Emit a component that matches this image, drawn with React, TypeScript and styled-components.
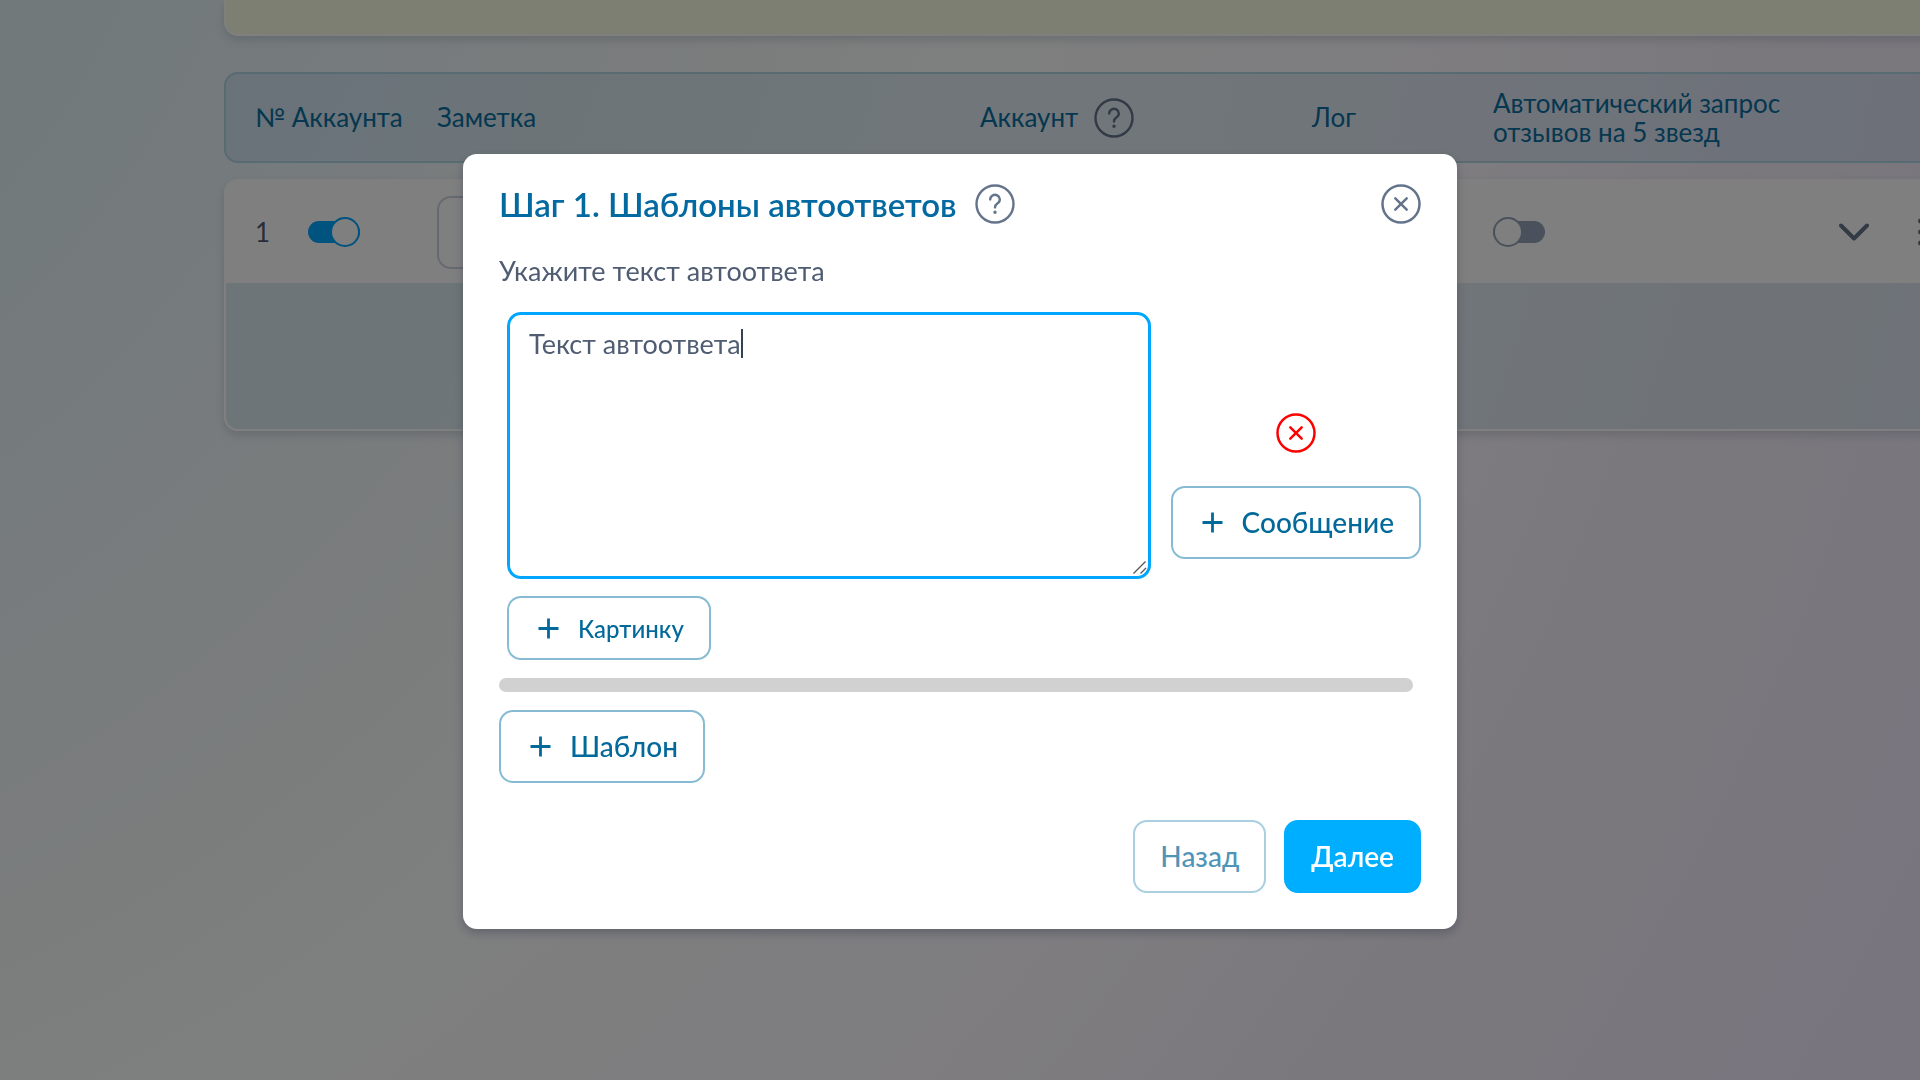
import React, { useLayoutEffect, useRef, useState } from 'react';
import styled, { createGlobalStyle, css } from 'styled-components';

const GlobalStyle = createGlobalStyle`
  *, *::before, *::after { box-sizing: border-box; }
  body {
    margin: 0;
    font-family: Lato, "Open Sans", sans-serif;
    font-size: 27px;
    line-height: 29px;
    color: #4f5c72;
  }
  button, input, textarea { font: inherit; color: inherit; }
`;

const Page = styled.div`
  min-height: 100vh;
  overflow: hidden;
  padding-left: 224px;
  background: radial-gradient(
    circle farthest-corner at -30% -28%,
    #e2f2f6 23%,
    #ecf6fb 34%,
    #f3f9f9 43%,
    #fdfefe 56%,
    #fcf9fe 73%,
    #f5f0fa 83%,
    #f0eafe 100%
  );
`;

const Main = styled.main`
  width: calc(100% + 64px);
`;

const Notice = styled.section`
  height: 36px;
  border: 2px solid #fff;
  border-top: 0;
  border-radius: 0 0 14px 14px;
  background: #f8ffe2;
  box-shadow: 0 4px 10px rgba(71, 85, 105, 0.2);
`;

const Table = styled.table`
  display: block;
  margin-top: 36px;
  font-size: 26px;
`;

const TableHead = styled.thead`
  display: block;
  border: 2px solid #b0d5e4;
  border-radius: 14px;
  background: rgba(148, 190, 222, 0.26);
  color: #0b6fa0;
`;

const TableBody = styled.tbody`
  display: block;
  margin-top: 16px;
  overflow: hidden;
  border: 2px solid #fff;
  border-radius: 14px;
  background: rgba(200, 222, 232, 0.5);
  box-shadow: 0 4px 10px rgba(71, 85, 105, 0.2);
`;

const Row = styled.tr<{ $filled?: boolean }>`
  display: grid;
  grid-template-columns: 182px 543px 332px 181px 346px 79px 1fr;
  align-items: center;
  padding-left: 29px;
  min-height: ${(p) => (p.$filled ? '102px' : '87px')};
  background: ${(p) => (p.$filled ? '#fff' : 'transparent')};
`;

const cell = css`
  display: flex;
  align-items: center;
  gap: 16px;
  padding: 0 24px 0 0;
  font-weight: 400;
  text-align: left;
`;

const HeadCell = styled.th`
  ${cell}
`;

const NumberHeadCell = styled(HeadCell)`
  padding: 0;
  white-space: nowrap;
`;

const Cell = styled.td`
  ${cell}
`;

const AccountCell = styled(Cell)`
  gap: 38px;
`;

const DetailsRow = styled.tr`
  display: block;
  height: 146px;
`;

const Switch = styled.input<{ $tone: string }>`
  appearance: none;
  display: grid;
  align-items: center;
  width: 52px;
  height: 30px;
  margin: 0;

  &::before,
  &::after {
    content: '';
    grid-area: 1 / 1;
  }

  &::before {
    height: 22px;
    border-radius: 11px;
    background: ${(p) => p.$tone};
  }

  &::after {
    width: 30px;
    height: 30px;
    border: 2px solid ${(p) => p.$tone};
    border-radius: 50%;
    background: #fff;
  }

  &:checked::after {
    justify-self: end;
  }
`;

const NoteInput = styled.input`
  width: 100%;
  height: 73px;
  padding: 0 20px;
  border: 2px solid #cbd5e1;
  border-radius: 14px;
  background: #fff;
`;

const IconButton = styled.button`
  display: inline-flex;
  flex: none;
  padding: 0;
  border: 0;
  background: none;
  color: ${(p) => p.color || '#64748b'};
  cursor: pointer;
`;

const Overlay = styled.div`
  position: fixed;
  inset: 0;
  display: flex;
  align-items: flex-start;
  justify-content: center;
  padding: 154px 24px 24px;
  overflow: auto;
  background: rgba(0, 0, 0, 0.5);
`;

const Dialog = styled.form`
  display: flex;
  flex-direction: column;
  width: 100%;
  max-width: 994px;
  padding: 30px 36px 36px;
  border-radius: 14px;
  background: #fff;
  box-shadow: 0 4px 10px rgba(30, 41, 59, 0.3);
`;

const DialogHeader = styled.header`
  display: flex;
  align-items: center;
  justify-content: space-between;
  height: 40px;
`;

const TitleGroup = styled.div`
  display: flex;
  align-items: center;
  gap: 18px;
`;

const Title = styled.h2`
  margin: 0;
  font-size: 33px;
  line-height: 40px;
  font-weight: 600;
  color: #0369a1;
`;

const FieldLabel = styled.label`
  margin-top: 32px;
`;

const Template = styled.div`
  display: flex;
  align-items: center;
  gap: 20px;
  margin-top: 27px;
  padding: 0 0 0 8px;
`;

const Message = styled.div`
  display: flex;
  flex: 1;
  flex-direction: column;
  align-items: flex-start;
  gap: 17px;
`;

const MessageField = styled.div`
  position: relative;
  width: 100%;
`;

const MessageText = styled.textarea`
  display: block;
  width: 100%;
  height: 267px;
  padding: 14px 19px;
  border: 3px solid #00a6ff;
  border-radius: 14px;
  outline: 0;
  background: #fff;
  caret-color: transparent;
  resize: vertical;

  &::-webkit-resizer {
    background: transparent;
  }
`;

const Caret = styled.span`
  position: absolute;
  top: 17px;
  width: 2px;
  height: 29px;
  background: #334155;
  pointer-events: none;
`;

const ResizeGrip = styled.svg`
  position: absolute;
  right: 4px;
  bottom: 4px;
  pointer-events: none;
`;

const MessageActions = styled.div`
  display: flex;
  flex-direction: column;
  align-items: center;
  gap: 33px;
`;

const OutlineButton = styled.button<{ $size?: 'small'; $muted?: boolean }>`
  display: inline-flex;
  align-items: center;
  gap: 15px;
  height: ${(p) => (p.$size === 'small' ? '64px' : '73px')};
  padding: 0 25px;
  border: 2px solid #86bbd3;
  border-radius: 14px;
  background: #fff;
  color: #03699a;
  font-size: ${(p) => (p.$size === 'small' ? '24px' : '28px')};
  font-weight: 500;
  opacity: ${(p) => (p.$muted ? 0.7 : 1)};
  cursor: pointer;
`;

const PrimaryButton = styled(OutlineButton)`
  border-color: #00aeff;
  background: #00aeff;
  color: #fff;
  font-weight: 600;
`;

const Divider = styled.hr`
  width: calc(100% - 8px);
  height: 14px;
  margin: 18px 0;
  border: 0;
  border-radius: 7px;
  background: #d1d1d1;
`;

const TemplateActions = styled.div`
  display: flex;
`;

const DialogFooter = styled.footer`
  display: flex;
  justify-content: flex-end;
  gap: 18px;
  margin-top: 37px;
`;

const HelpIcon = () => (
  <svg width="40" height="40" viewBox="-20 -20 40 40" fill="none" stroke="currentColor" strokeWidth="2.4" strokeLinecap="round">
    <circle r="18.5" />
    <path d="M-4.8 -4.6a4.8 4.6 0 1 1 7.4 3.9C0.8 0.6 0 1.6 0 3.4" />
    <circle cy="8.2" r="0.8" fill="currentColor" strokeWidth="1.8" />
  </svg>
);

const CloseIcon = () => (
  <svg width="40" height="40" viewBox="-20 -20 40 40" fill="none" stroke="currentColor" strokeWidth="2.5" strokeLinecap="round">
    <circle r="18.5" />
    <path d="M-5.7 -5.7L5.7 5.7M5.7 -5.7L-5.7 5.7" />
  </svg>
);

const PlusIcon = () => (
  <svg width="29" height="29" viewBox="0 0 29 29" fill="none" stroke="currentColor" strokeWidth="2.8">
    <path d="M14.5 4.5v20M4.5 14.5h20" />
  </svg>
);

const ChevronIcon = () => (
  <svg width="30" height="18" viewBox="0 0 30 18" fill="none" stroke="currentColor" strokeWidth="4" strokeLinecap="round" strokeLinejoin="round">
    <path d="M2 2.5l13 13L28 2.5" />
  </svg>
);

const DotsIcon = () => (
  <svg width="5" height="28" viewBox="0 0 5 28" fill="currentColor">
    <circle cx="2.5" cy="3" r="2.5" />
    <circle cx="2.5" cy="14" r="2.5" />
    <circle cx="2.5" cy="25" r="2.5" />
  </svg>
);

function MessageEditor() {
  const field = useRef<HTMLTextAreaElement>(null);
  const [text, setText] = useState('Текст автоответа');
  const [caretLeft, setCaretLeft] = useState(22);

  useLayoutEffect(() => {
    const context = document.createElement('canvas').getContext('2d');
    if (!field.current || !context) return;
    const style = getComputedStyle(field.current);
    context.font = `${style.fontWeight} ${style.fontSize} ${style.fontFamily}`;
    setCaretLeft(22 + Math.round(context.measureText(text).width));
  }, [text]);

  return (
    <MessageField>
      <MessageText id="message" ref={field} autoFocus spellCheck={false} value={text} onChange={(e) => setText(e.target.value)} />
      <Caret style={{ left: caretLeft }} />
      <ResizeGrip width="14" height="14" viewBox="0 0 14 14" stroke="#555" strokeWidth="1.3">
        <path d="M0.5 12.5L12.5 0.5M7.5 12.5L13 7" />
      </ResizeGrip>
    </MessageField>
  );
}

export default function App() {
  const [active, setActive] = useState(true);
  const [askReview, setAskReview] = useState(false);

  return (
    <>
      <GlobalStyle />
      <Page>
        <Main>
          <Notice />
          <Table>
            <TableHead>
              <Row>
                <NumberHeadCell>№ Аккаунта</NumberHeadCell>
                <HeadCell>Заметка</HeadCell>
                <HeadCell>
                  Аккаунт
                  <IconButton type="button" aria-label="Справка об аккаунте"><HelpIcon /></IconButton>
                </HeadCell>
                <HeadCell>Лог</HeadCell>
                <HeadCell>Автоматический запрос отзывов на 5 звезд</HeadCell>
              </Row>
            </TableHead>
            <TableBody>
              <Row $filled>
                <AccountCell>
                  1
                  <Switch type="checkbox" $tone="#00a6ff" aria-label="Аккаунт включён" checked={active} onChange={(e) => setActive(e.target.checked)} />
                </AccountCell>
                <Cell><NoteInput aria-label="Заметка" /></Cell>
                <Cell />
                <Cell />
                <Cell>
                  <Switch type="checkbox" $tone="#94a3b8" aria-label="Запрос отзывов" checked={askReview} onChange={(e) => setAskReview(e.target.checked)} />
                </Cell>
                <Cell><IconButton type="button" aria-label="Развернуть"><ChevronIcon /></IconButton></Cell>
                <Cell><IconButton type="button" aria-label="Меню"><DotsIcon /></IconButton></Cell>
              </Row>
              <DetailsRow />
            </TableBody>
          </Table>
        </Main>
      </Page>

      <Overlay>
        <Dialog role="dialog" aria-modal="true" aria-labelledby="dialog-title" onSubmit={(e) => e.preventDefault()}>
          <DialogHeader>
            <TitleGroup>
              <Title id="dialog-title">Шаг 1. Шаблоны автоответов</Title>
              <IconButton type="button" aria-label="Справка о шаблонах"><HelpIcon /></IconButton>
            </TitleGroup>
            <IconButton type="button" aria-label="Закрыть"><CloseIcon /></IconButton>
          </DialogHeader>
          <FieldLabel htmlFor="message">Укажите текст автоответа</FieldLabel>
          <Template>
            <Message>
              <MessageEditor />
              <OutlineButton type="button" $size="small"><PlusIcon />Картинку</OutlineButton>
            </Message>
            <MessageActions>
              <IconButton type="button" color="#ff0000" aria-label="Удалить сообщение"><CloseIcon /></IconButton>
              <OutlineButton type="button"><PlusIcon />Сообщение</OutlineButton>
            </MessageActions>
          </Template>
          <Divider />
          <TemplateActions>
            <OutlineButton type="button"><PlusIcon />Шаблон</OutlineButton>
          </TemplateActions>
          <DialogFooter>
            <OutlineButton type="button" $muted>Назад</OutlineButton>
            <PrimaryButton type="submit">Далее</PrimaryButton>
          </DialogFooter>
        </Dialog>
      </Overlay>
    </>
  );
}
